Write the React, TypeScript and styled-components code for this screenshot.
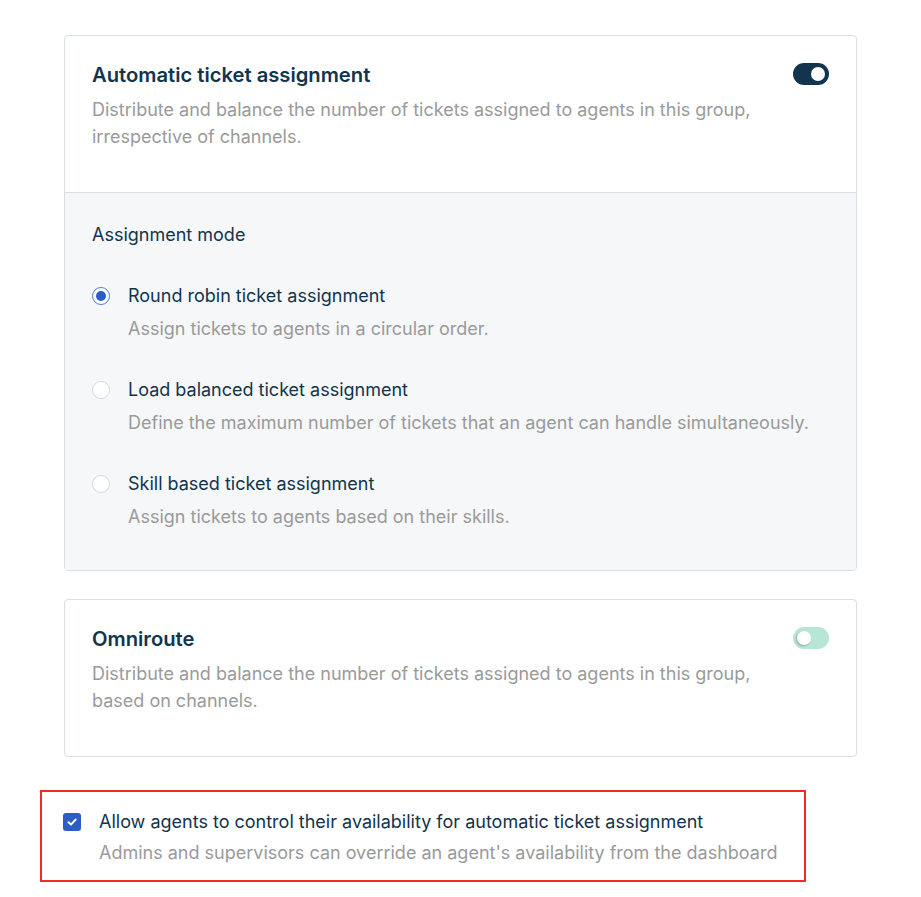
import React from "react";
import styled, { createGlobalStyle } from "styled-components";

const GlobalStyle = createGlobalStyle`
    body {
        margin: 0;
        background: #ffffff;
        font-family: Inter, "Liberation Sans", Arial, sans-serif;
        color: #12344d;
    }
`;

const Page = styled.div`
    width: 921px;
    height: 897px;
    padding-top: 35px;
    box-sizing: border-box;
`;

const Card = styled.div`
    margin: 0 0 28px 64px;
    width: 793px;
    box-sizing: border-box;
    border: 1px solid #d9dfe4;
    border-radius: 4px;
    background: #ffffff;
    overflow: hidden;
`;

const CardHeader = styled.div`
    display: flex;
    justify-content: space-between;
    align-items: flex-start;
    padding: 27px 27px 42px 27px;
`;

const HeaderText = styled.div`
    display: flex;
    flex-direction: column;
    gap: 9px;
`;

const CardTitle = styled.h2`
    margin: 0;
    font-size: 20.2px;
    line-height: 24px;
    font-weight: 600;
    color: #12344d;
`;

const Muted = styled.p`
    margin: 0;
    font-size: 18px;
    line-height: 27px;
    color: #9a9a9a;
    max-width: 690px;
`;

const Toggle = styled.span<{ $on: boolean }>`
    position: relative;
    flex: none;
    width: 36px;
    height: 22px;
    border-radius: 11px;
    background: ${(p) => (p.$on ? "#12344d" : "#b7e6d6")};
    &::after {
        content: "";
        position: absolute;
        top: 4px;
        left: ${(p) => (p.$on ? "18px" : "4px")};
        width: 14px;
        height: 14px;
        border-radius: 50%;
        background: #ffffff;
        box-shadow: ${(p) => (p.$on ? "none" : "-1px 1px 2px rgba(0,0,0,0.25)")};
    }
`;

const ModeSection = styled.div`
    border-top: 1px solid #d9dfe4;
    background: #f5f7f9;
    padding: 30px 27px 41px 27px;
    display: flex;
    flex-direction: column;
    gap: 37px;
`;

const SectionLabel = styled.div`
    font-size: 18px;
    line-height: 24px;
    color: #12344d;
`;

const Option = styled.div`
    display: grid;
    grid-template-columns: 18px 1fr;
    column-gap: 18px;
    row-gap: 9px;
`;

const Radio = styled.span<{ $checked: boolean }>`
    align-self: center;
    width: 18px;
    height: 18px;
    box-sizing: border-box;
    border-radius: 50%;
    background: #ffffff;
    border: ${(p) => (p.$checked ? "1.5px solid #4f7bd9" : "1px solid #d4dbe2")};
    display: flex;
    align-items: center;
    justify-content: center;
    &::after {
        content: "";
        display: ${(p) => (p.$checked ? "block" : "none")};
        width: 10px;
        height: 10px;
        border-radius: 50%;
        background: #2c5cc5;
    }
`;

const OptionLabel = styled.div`
    font-size: 18px;
    line-height: 24px;
    color: #12344d;
`;

const OptionDesc = styled.div`
    grid-column: 2;
    font-size: 18px;
    line-height: 24px;
    color: #9a9a9a;
`;

const Highlight = styled.div`
    margin: 33px 0 0 40px;
    width: 766px;
    box-sizing: border-box;
    border: 2px solid #ee2c24;
    padding: 18px 20px 15px 21px;
    display: grid;
    grid-template-columns: 18px 1fr;
    column-gap: 18px;
    row-gap: 7px;
`;

const Checkbox = styled.span`
    align-self: center;
    width: 18px;
    height: 18px;
    border-radius: 3px;
    background: #2c5cc5;
    display: flex;
    align-items: center;
    justify-content: center;
`;

const options = [
    {
        label: "Round robin ticket assignment",
        desc: "Assign tickets to agents in a circular order.",
        checked: true,
    },
    {
        label: "Load balanced ticket assignment",
        desc: "Define the maximum number of tickets that an agent can handle simultaneously.",
        checked: false,
    },
    {
        label: "Skill based ticket assignment",
        desc: "Assign tickets to agents based on their skills.",
        checked: false,
    },
];

const App = () => {
    return (
        <Page>
            <GlobalStyle />
            <Card>
                <CardHeader>
                    <HeaderText>
                        <CardTitle>Automatic ticket assignment</CardTitle>
                        <Muted>
                            Distribute and balance the number of tickets assigned to agents in this group,
                            irrespective of channels.
                        </Muted>
                    </HeaderText>
                    <Toggle $on={true} />
                </CardHeader>
                <ModeSection>
                    <SectionLabel>Assignment mode</SectionLabel>
                    {options.map((o) => (
                        <Option key={o.label}>
                            <Radio $checked={o.checked} />
                            <OptionLabel>{o.label}</OptionLabel>
                            <OptionDesc>{o.desc}</OptionDesc>
                        </Option>
                    ))}
                </ModeSection>
            </Card>
            <Card>
                <CardHeader>
                    <HeaderText>
                        <CardTitle>Omniroute</CardTitle>
                        <Muted>
                            Distribute and balance the number of tickets assigned to agents in this group,
                            based on channels.
                        </Muted>
                    </HeaderText>
                    <Toggle $on={false} />
                </CardHeader>
            </Card>
            <Highlight>
                <Checkbox>
                    <svg width="12" height="12" viewBox="0 0 12 12">
                        <path d="M2.5 6.2 L5 8.6 L9.6 3.6" fill="none" stroke="#fff" strokeWidth="2" strokeLinecap="round" strokeLinejoin="round" />
                    </svg>
                </Checkbox>
                <OptionLabel>Allow agents to control their availability for automatic ticket assignment</OptionLabel>
                <OptionDesc>Admins and supervisors can override an agent's availability from the dashboard</OptionDesc>
            </Highlight>
        </Page>
    );
};

export default App;
